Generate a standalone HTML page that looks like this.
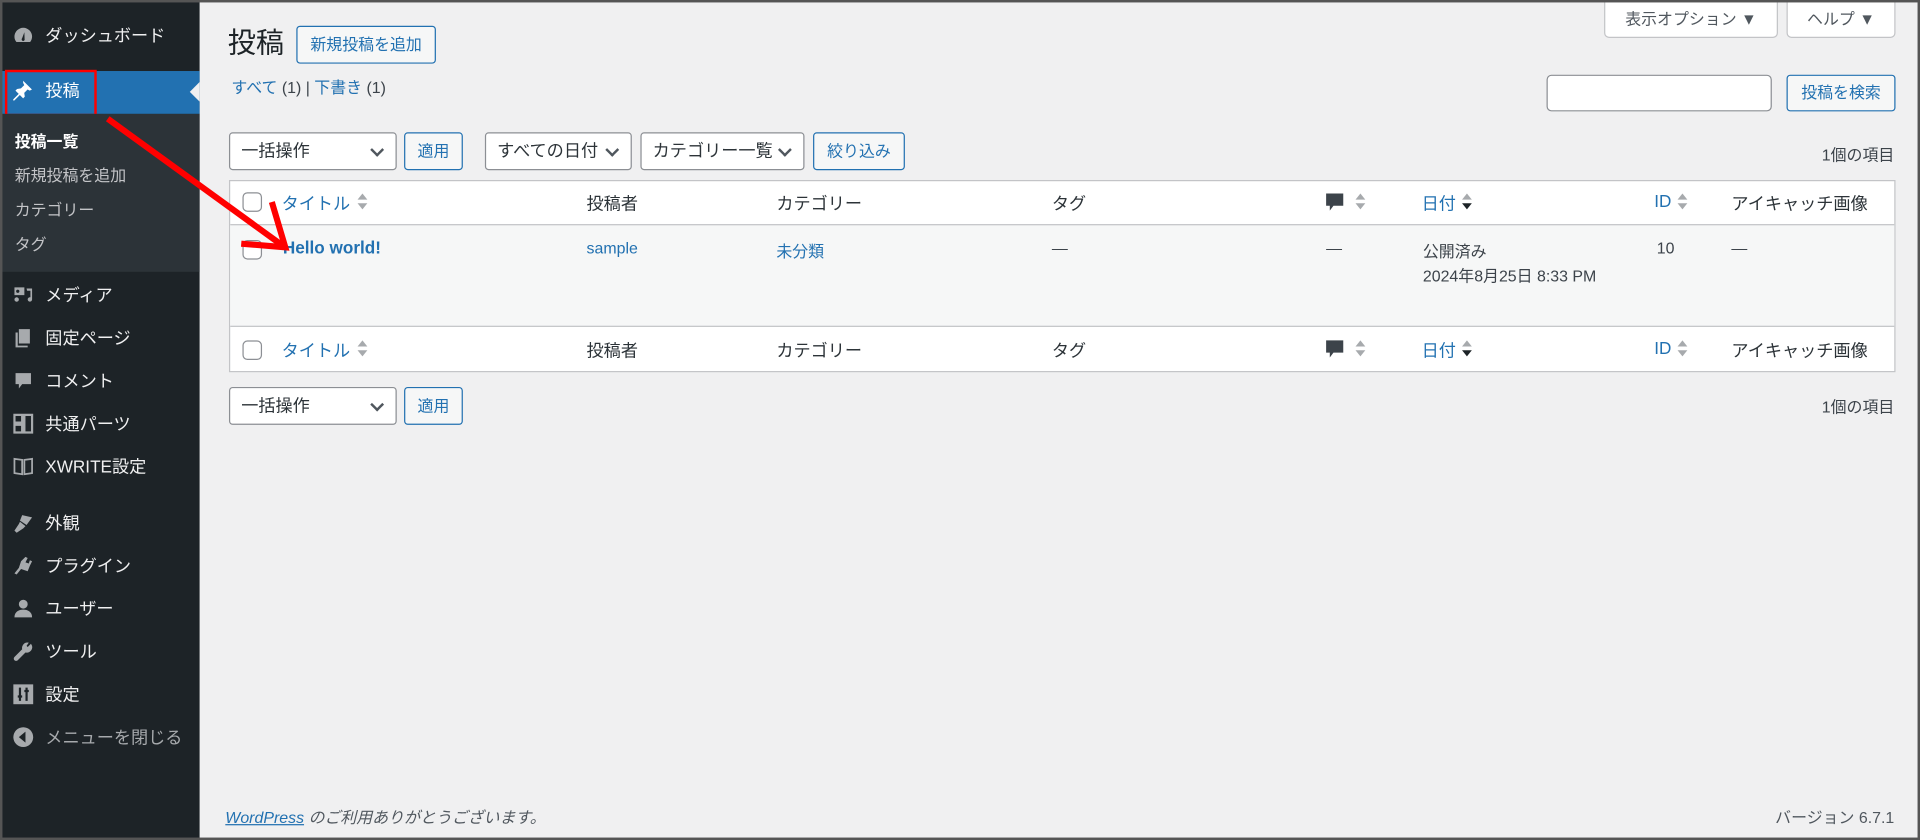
<!DOCTYPE html>
<html><head><meta charset="utf-8">
<style>
*{box-sizing:border-box;margin:0;padding:0}
html,body{width:1920px;height:840px;overflow:hidden;background:#f0f0f1}
#s{position:absolute;left:0;top:0;width:1568px;height:686px;transform:scale(1.22449);transform-origin:0 0;font-family:"Liberation Sans","Noto Sans CJK JP",sans-serif;color:#3c434a;font-size:13px;background:#f0f0f1;overflow:hidden}
.a{position:absolute;white-space:nowrap}
#side{position:absolute;left:0;top:0;width:163px;height:686px;background:#1d2327}
.mi{position:absolute;left:37px;color:#f0f0f1;font-size:14px;line-height:20px}
.ic{position:absolute;left:10px;width:18px;height:18px;margin-top:1px}
.sub{position:absolute;left:12px;color:#c3c4c7;font-size:13px;line-height:18px}
.btn{position:absolute;border:1px solid #2271b1;color:#2271b1;background:#f6f7f7;border-radius:3px;font-size:13px;text-align:center}
.sel{position:absolute;border:1px solid #8c8f94;background:#fff;border-radius:3px;font-size:14px;color:#2c3338;padding-left:9px}
.sel:after{content:"";position:absolute;right:11px;top:50%;width:6px;height:6px;border-right:2px solid #50575e;border-bottom:2px solid #50575e;transform:translateY(-70%) rotate(45deg)}
.lk{color:#2271b1}
.th{font-size:14px;color:#2c3338}
.cb{position:absolute;width:16px;height:16px;border:1px solid #8c8f94;border-radius:4px;background:#fff}
.sort{position:absolute;width:8px;height:14px}
.sort:before{content:"";position:absolute;left:0;top:0;border-left:4px solid transparent;border-right:4px solid transparent;border-bottom:5px solid #a7aaad}
.sort:after{content:"";position:absolute;left:0;top:8px;border-left:4px solid transparent;border-right:4px solid transparent;border-top:5px solid #a7aaad}
.sort.d:after{border-top-color:#1d2327}
</style></head><body><div id="s">
<div id="side">
 <svg class="ic" style="top:19px" viewBox="0 0 20 20"><path d="M10 3a8 8 0 0 0-8 8c0 2 .7 3.6 1.8 4.9h12.4A8 8 0 0 0 18 11a8 8 0 0 0-8-8zm0 12a1.5 1.5 0 0 1-1-2.6L11 7l.2 6A1.5 1.5 0 0 1 10 15z" fill="#a7aaad"/></svg>
 <div class="mi" style="top:19px">ダッシュボード</div>
 <div class="a" style="left:0;top:58px;width:163px;height:35px;background:#2271b1"></div>
 <svg class="ic" style="top:64px;left:9px" viewBox="0 0 20 20"><path d="M11 1l8 8-2 1-2-1-3 3 .5 3.5-1.5 1.5-3-3-5 5H2v-1l5-5-3-3 1.5-1.5L9 8l3-3-1-2z" fill="#fff"/></svg>
 <div class="mi" style="top:64px;color:#fff">投稿</div>
 <div class="a" style="left:155px;top:67px;border-top:8px solid transparent;border-bottom:8px solid transparent;border-right:8px solid #f0f0f1"></div>
 <div class="a" style="left:4px;top:57px;width:75px;height:38px;border:2px solid #f00"></div>
 <div class="a" style="left:0;top:93px;width:163px;height:129px;background:#2c3338"></div>
 <div class="sub" style="top:107px;color:#fff;font-weight:bold">投稿一覧</div>
 <div class="sub" style="top:135px">新規投稿を追加</div>
 <div class="sub" style="top:163px">カテゴリー</div>
 <div class="sub" style="top:191px">タグ</div>
 <svg class="ic" style="top:231px" viewBox="0 0 20 20"><path d="M2 3h9v7H2zM5 5a1.5 1.5 0 1 0 .01 0zM13 4h5v10a2 2 0 1 1-1.5-2V6h-3zM4 12a2 2 0 1 0 .01 0z" fill="#a7aaad"/></svg>
 <div class="mi" style="top:231px">メディア</div>
 <svg class="ic" style="top:266px" viewBox="0 0 20 20"><path d="M6 2h10v13H6zM3 5h2v12h9v1.5H3z" fill="#a7aaad"/></svg>
 <div class="mi" style="top:266px">固定ページ</div>
 <svg class="ic" style="top:301px" viewBox="0 0 20 20"><path d="M3 3h14v10H9l-3 4v-4H3z" fill="#a7aaad"/></svg>
 <div class="mi" style="top:301px">コメント</div>
 <svg class="ic" style="top:336px" viewBox="0 0 20 20"><path d="M2 2h7v7H2zM11 2h7v16h-7zM2 11h7v7H2z" fill="none" stroke="#a7aaad" stroke-width="2"/></svg>
 <div class="mi" style="top:336px">共通パーツ</div>
 <svg class="ic" style="top:371px" viewBox="0 0 20 20"><path d="M2 3l7 1v13l-7-1zM18 3l-7 1v13l7-1z" fill="none" stroke="#a7aaad" stroke-width="1.6"/></svg>
 <div class="mi" style="top:371px">XWRITE設定</div>
 <svg class="ic" style="top:417px" viewBox="0 0 20 20"><path d="M9 3l9 2-5 7-6-4zM7 9l5 4-2 2-6 4-2-2 4-6z" fill="#a7aaad"/></svg>
 <div class="mi" style="top:417px">外観</div>
 <svg class="ic" style="top:452px" viewBox="0 0 20 20"><path d="M12 2l2 1-2 4 3 1 1-3 2 1-2 4-2 5-6-2-4 5-2-1 4-5 2-6z" fill="#a7aaad"/></svg>
 <div class="mi" style="top:452px">プラグイン</div>
 <svg class="ic" style="top:487px" viewBox="0 0 20 20"><circle cx="10" cy="6" r="4" fill="#a7aaad"/><path d="M2 18c0-5 4-7 8-7s8 2 8 7z" fill="#a7aaad"/></svg>
 <div class="mi" style="top:487px">ユーザー</div>
 <svg class="ic" style="top:522px" viewBox="0 0 20 20"><path d="M17 3l-3 3-1-1 2-3a5 5 0 0 0-6 6L2 15a2 2 0 0 0 3 3l7-7a5 5 0 0 0 6-6z" fill="#a7aaad"/></svg>
 <div class="mi" style="top:522px">ツール</div>
 <svg class="ic" style="top:557px" viewBox="0 0 20 20"><rect x="1" y="1" width="18" height="18" fill="#a7aaad"/><path d="M7 4v12M13 4v12M5 12h4M11 7h4" stroke="#1d2327" stroke-width="2"/></svg>
 <div class="mi" style="top:557px">設定</div>
 <svg class="ic" style="top:592px" viewBox="0 0 20 20"><circle cx="10" cy="10" r="9" fill="#a7aaad"/><path d="M12 5v10l-6-5z" fill="#1d2327"/></svg>
 <div class="mi" style="top:592px;color:#a7aaad">メニューを閉じる</div>
</div>

<div class="a" style="left:186px;top:19px;font-size:23px;color:#1d2327;line-height:32px">投稿</div>
<div class="btn" style="left:242px;top:21px;width:114px;height:31px;line-height:29px">新規投稿を追加</div>
<div class="a" style="left:1310px;top:-4px;width:142px;height:35px;background:#fff;border:1px solid #c3c4c7;border-radius:0 0 4px 4px;color:#50575e;line-height:38px;text-align:center">表示オプション ▼</div>
<div class="a" style="left:1459px;top:-4px;width:89px;height:35px;background:#fff;border:1px solid #c3c4c7;border-radius:0 0 4px 4px;color:#50575e;line-height:38px;text-align:center">ヘルプ ▼</div>
<div class="a" style="left:189px;top:64px;line-height:16px"><span class="lk">すべて</span> (1) | <span class="lk">下書き</span> (1)</div>
<div class="a" style="left:1263px;top:61px;width:184px;height:30px;background:#fff;border:1px solid #8c8f94;border-radius:4px"></div>
<div class="btn" style="left:1459px;top:61px;width:89px;height:30px;line-height:28px">投稿を検索</div>

<div class="sel" style="left:187px;top:108px;width:137px;height:31px;line-height:29px">一括操作</div>
<div class="btn" style="left:330px;top:108px;width:48px;height:31px;line-height:29px">適用</div>
<div class="sel" style="left:396px;top:108px;width:120px;height:31px;line-height:29px">すべての日付</div>
<div class="sel" style="left:523px;top:108px;width:134px;height:31px;line-height:29px">カテゴリー一覧</div>
<div class="btn" style="left:664px;top:108px;width:75px;height:31px;line-height:29px">絞り込み</div>
<div class="a" style="right:21px;top:116px">1個の項目</div>

<div class="a" style="left:187px;top:147px;width:1361px;height:157px;border:1px solid #c3c4c7;background:#fff"></div>
<div class="a" style="left:188px;top:183px;width:1359px;height:84px;background:#f6f7f7;border-top:1px solid #c3c4c7;border-bottom:1px solid #c3c4c7"></div>

<div class="cb" style="left:198px;top:157px"></div>
<div class="a th lk" style="left:230px;top:156px;color:#2271b1;font-size:14px">タイトル</div><div class="sort" style="left:292px;top:158px"></div>
<div class="a th" style="left:479px;top:156px">投稿者</div>
<div class="a th" style="left:634px;top:156px">カテゴリー</div>
<div class="a th" style="left:859px;top:156px">タグ</div>
<svg class="a" style="left:1082px;top:157px" width="16" height="18" viewBox="0 0 16 18"><path d="M1 1h14v10H7l-3 4v-4H1z" fill="#3c434a"/></svg><div class="sort" style="left:1107px;top:158px"></div>
<div class="a th" style="left:1161px;top:156px;color:#2271b1">日付</div><div class="sort d" style="left:1194px;top:158px"></div>
<div class="a th" style="left:1351px;top:156px;color:#2271b1">ID</div><div class="sort" style="left:1370px;top:158px"></div>
<div class="a th" style="left:1414px;top:156px">アイキャッチ画像</div>

<div class="cb" style="left:198px;top:196px"></div>
<div class="a" style="left:231px;top:194px;font-size:14px;font-weight:bold;color:#2271b1">Hello world!</div>
<div class="a lk" style="left:479px;top:195px">sample</div>
<div class="a lk" style="left:634px;top:195px">未分類</div>
<div class="a" style="left:859px;top:195px">—</div>
<div class="a" style="left:1083px;top:195px">—</div>
<div class="a" style="left:1162px;top:195px">公開済み</div>
<div class="a" style="left:1162px;top:215px">2024年8月25日 8:33 PM</div>
<div class="a" style="left:1353px;top:195px">10</div>
<div class="a" style="left:1414px;top:195px">—</div>

<div class="cb" style="left:198px;top:278px"></div>
<div class="a th" style="left:230px;top:276px;color:#2271b1">タイトル</div><div class="sort" style="left:292px;top:278px"></div>
<div class="a th" style="left:479px;top:276px">投稿者</div>
<div class="a th" style="left:634px;top:276px">カテゴリー</div>
<div class="a th" style="left:859px;top:276px">タグ</div>
<svg class="a" style="left:1082px;top:277px" width="16" height="18" viewBox="0 0 16 18"><path d="M1 1h14v10H7l-3 4v-4H1z" fill="#3c434a"/></svg><div class="sort" style="left:1107px;top:278px"></div>
<div class="a th" style="left:1161px;top:276px;color:#2271b1">日付</div><div class="sort d" style="left:1194px;top:278px"></div>
<div class="a th" style="left:1351px;top:276px;color:#2271b1">ID</div><div class="sort" style="left:1370px;top:278px"></div>
<div class="a th" style="left:1414px;top:276px">アイキャッチ画像</div>

<div class="sel" style="left:187px;top:316px;width:137px;height:31px;line-height:29px">一括操作</div>
<div class="btn" style="left:330px;top:316px;width:48px;height:31px;line-height:29px">適用</div>
<div class="a" style="right:21px;top:322px">1個の項目</div>

<div class="a" style="left:184px;top:657px;color:#50575e;font-style:italic"><span style="color:#2271b1;text-decoration:underline">WordPress</span> のご利用ありがとうございます。</div>
<div class="a" style="right:21px;top:657px;color:#50575e">バージョン 6.7.1</div>

<svg class="a" style="left:0;top:0" width="300" height="260"><path d="M88 97L230 200" stroke="#f00" stroke-width="5"/><path d="M197 199L233 202L222 165" stroke="#f00" stroke-width="5" fill="none"/></svg>

<div class="a" style="left:0;top:0;width:1568px;height:686px;border:2px solid #555"></div>
</div></body></html>
